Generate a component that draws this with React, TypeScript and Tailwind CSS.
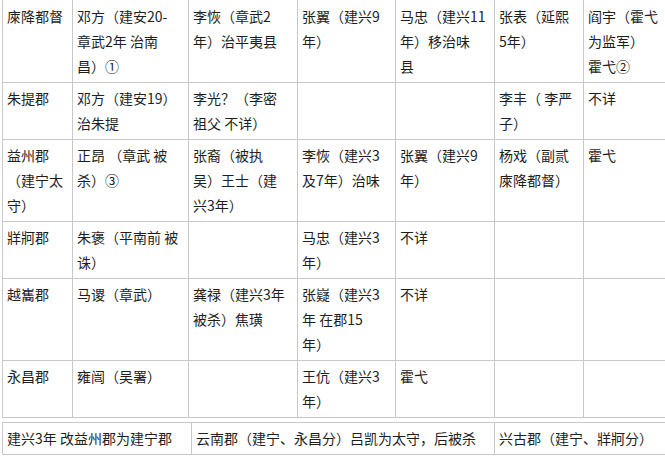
import React from "react";

type Row = string[][];

const rows: Row[] = [
  [
    ["庲降都督"],
    ["邓方（建安20-", "章武2年 治南", "昌）①"],
    ["李恢（章武2", "年）治平夷县"],
    ["张翼（建兴9", "年）"],
    ["马忠（建兴11", "年）移治味", "县"],
    ["张表（延熙", "5年）"],
    ["阎宇（霍弋", "为监军）", "霍弋②"],
  ],
  [
    ["朱提郡"],
    ["邓方（建安19）", "治朱提"],
    ["李光？（李密", "祖父 不详）"],
    [],
    [],
    ["李丰（ 李严", "子）"],
    ["不详"],
  ],
  [
    ["益州郡", "（建宁太", "守）"],
    ["正昂 （章武 被", "杀）③"],
    ["张裔（被执", "吴）王士（建", "兴3年）"],
    ["李恢（建兴3", "及7年）治味"],
    ["张翼（建兴9", "年）"],
    ["杨戏（副贰", "庲降都督）"],
    ["霍弋"],
  ],
  [
    ["牂牁郡"],
    ["朱褒（平南前 被", "诛）"],
    [],
    ["马忠（建兴3", "年）"],
    ["不详"],
    [],
    [],
  ],
  [
    ["越巂郡"],
    ["马谡（章武）"],
    ["龚禄（建兴3年", "被杀）焦璜"],
    ["张嶷（建兴3", "年 在郡15", "年）"],
    ["不详"],
    [],
    [],
  ],
  [
    ["永昌郡"],
    ["雍闿（吴署）"],
    [],
    ["王伉（建兴3", "年）"],
    ["霍弋"],
    [],
    [],
  ],
];

const font = {
  fontFamily: '"Noto Sans CJK SC", "Noto Sans", sans-serif',
};

function Lines({ lines }: { lines: string[] }) {
  return (
    <>
      {lines.map((l, i) => (
        <div key={i} className="whitespace-pre">
          {l}
        </div>
      ))}
    </>
  );
}

export default function App() {
  return (
    <div
      className="w-[665px] h-[456px] overflow-hidden bg-white pl-[2px] text-[14px] leading-[25px] text-[#1e1e1e]"
      style={font}
    >
      <div className="grid w-[684px] grid-cols-[71px_116px_109px_98px_99px_89px_102px]">
        {rows.map((row, ri) =>
          row.map((cell, ci) => (
            <div
              key={`${ri}-${ci}`}
              className={[
                "border-b border-r border-[#c8c8c8] px-[4px] pb-[3px]",
                ri === 0 ? "pt-[4px]" : "pt-[3px]",
                ci === 0 ? "border-l" : "",
              ].join(" ")}
            >
              <Lines lines={cell} />
            </div>
          ))
        )}
      </div>
      <div className="mt-[4px] grid w-[684px] grid-cols-[190px_303px_191px] border-t border-[#c8c8c8]">
        <div className="border-b border-l border-r border-[#c8c8c8] px-[4px] py-[3px] whitespace-pre">
          建兴3年 改益州郡为建宁郡
        </div>
        <div className="border-b border-r border-[#c8c8c8] px-[4px] py-[3px] whitespace-pre">
          云南郡（建宁、永昌分）吕凯为太守，后被杀
        </div>
        <div className="border-b border-r border-[#c8c8c8] px-[4px] py-[3px] whitespace-pre">
          兴古郡（建宁、牂牁分）
        </div>
      </div>
    </div>
  );
}
